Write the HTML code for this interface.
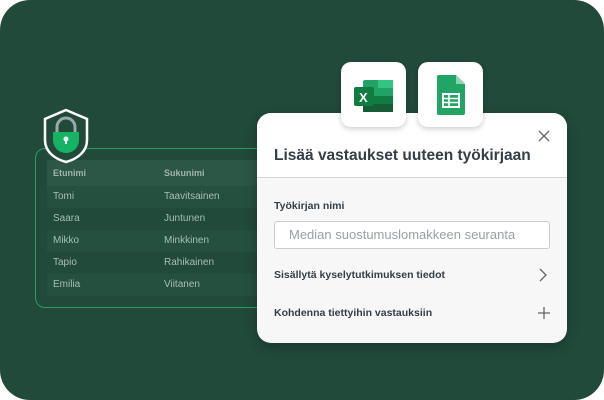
<!DOCTYPE html>
<html><head><meta charset="utf-8"><style>
*{margin:0;padding:0;box-sizing:border-box}
body{width:604px;height:400px;background:#fff;font-family:"Liberation Sans",sans-serif;position:relative;overflow:hidden}
.bg{position:absolute;left:0;top:0;width:604px;height:400px;background:#214a3b;border-radius:30px}
.tbl{position:absolute;left:35px;top:148px;width:260px;height:160px;border:1.5px solid #2f9a62;border-radius:10px}
.row{position:absolute;left:47px;width:230px;height:22px;font-size:10px;color:#a8bdb3;line-height:22px}
.row span{position:absolute}
.hd{background:#2c5646;height:26px;line-height:26px;font-size:9px;font-weight:bold;color:#9fb5aa}
.st{background:#25503f}
.card{position:absolute;left:257px;top:113px;width:310px;height:230px;background:#f7f7f7;border-radius:14px;box-shadow:0 4px 12px rgba(0,0,0,.25)}
.top{position:absolute;left:0;top:0;width:310px;height:65px;background:#fff;border-radius:14px 14px 0 0;border-bottom:1px solid #d4d4d4}
.tile{position:absolute;top:62px;width:65px;height:65px;background:#fff;border-radius:10px;box-shadow:0 2px 6px rgba(0,0,0,.2)}
.t{position:absolute;color:#333e48;font-weight:bold}
</style></head><body>
<div class="bg"></div>
<div class="tbl"></div>
<div class="row hd" style="top:160px"><span style="left:6px">Etunimi</span><span style="left:117px">Sukunimi</span></div>
<div class="row st" style="top:186px"><span style="left:6px">Tomi</span><span style="left:117px">Taavitsainen</span></div>
<div class="row" style="top:208px"><span style="left:6px">Saara</span><span style="left:117px">Juntunen</span></div>
<div class="row st" style="top:230px"><span style="left:6px">Mikko</span><span style="left:117px">Minkkinen</span></div>
<div class="row" style="top:252px"><span style="left:6px">Tapio</span><span style="left:117px">Rahikainen</span></div>
<div class="row st" style="top:274px"><span style="left:6px">Emilia</span><span style="left:117px">Viitanen</span></div>
<svg style="position:absolute;left:42px;top:108px" width="48" height="56" viewBox="0 0 48 56">
<path d="M24 2 L45 11 V32 C45 44 35 51 24 54 C13 51 3 44 3 32 V11 Z" fill="#214a3b" stroke="#fff" stroke-width="2.5"/>
<path d="M15 24 V19 A9 9 0 0 1 33 19 V24" fill="none" stroke="#9aa" stroke-width="3"/>
<path d="M11 24 H37 V32 A13 13 0 0 1 11 32 Z" fill="#16b364"/>
<circle cx="24" cy="31" r="2.5" fill="#fff"/><rect x="23" y="31" width="2" height="5" fill="#fff"/>
</svg>
<div class="card"><div class="top"></div>
<div class="t" style="left:17px;top:34px;font-size:15.5px">Lisää vastaukset uuteen työkirjaan</div>
<svg style="position:absolute;left:281px;top:17px" width="12" height="12"><path d="M1 1L11 11M11 1L1 11" stroke="#666" stroke-width="1.3"/></svg>
<div class="t" style="left:17px;top:87px;font-size:10.5px">Työkirjan nimi</div>
<div style="position:absolute;left:17px;top:108px;width:276px;height:28px;background:#fff;border:1px solid #ccc;border-radius:3px;font-size:13px;color:#9aa0a6;line-height:26px;padding-left:14px">Median suostumuslomakkeen seuranta</div>
<div class="t" style="left:17px;top:156px;font-size:10.5px">Sisällytä kyselytutkimuksen tiedot</div>
<svg style="position:absolute;left:281px;top:155px" width="10" height="14"><path d="M2 1L8 7L2 13" fill="none" stroke="#666" stroke-width="1.3"/></svg>
<div class="t" style="left:17px;top:194px;font-size:10.5px">Kohdenna tiettyihin vastauksiin</div>
<svg style="position:absolute;left:280px;top:193px" width="14" height="14"><path d="M7 1V13M1 7H13" stroke="#666" stroke-width="1.3"/></svg>
</div>
<div class="tile" style="left:341px"><svg style="position:absolute;left:12px;top:16px" width="42" height="36" viewBox="0 0 42 36">
<rect x="10" y="2" width="30" height="32" rx="2" fill="#21a366"/><rect x="25" y="2" width="15" height="8" fill="#33c481"/><rect x="10" y="18" width="30" height="8" fill="#107c41"/><rect x="10" y="26" width="30" height="8" fill="#185c37"/>
<rect x="1" y="9" width="20" height="19" rx="2" fill="#107c41"/><text x="6" y="24" font-size="13" fill="#fff" font-family="Liberation Sans" font-weight="bold">X</text></svg></div>
<div class="tile" style="left:418px"><svg style="position:absolute;left:19px;top:13px" width="28" height="40" viewBox="0 0 28 40">
<path d="M2 0H19L28 9V38A2 2 0 0 1 26 40H2A2 2 0 0 1 0 38V2A2 2 0 0 1 2 0Z" fill="#21a464"/><path d="M19 0V9H28Z" fill="#8ed1b1"/>
<rect x="6" y="19" width="16" height="13" fill="none" stroke="#fff" stroke-width="2"/><path d="M6 23.5H22M6 27.5H22M12 19V32" stroke="#fff" stroke-width="1.6"/></svg></div>
</body></html>
